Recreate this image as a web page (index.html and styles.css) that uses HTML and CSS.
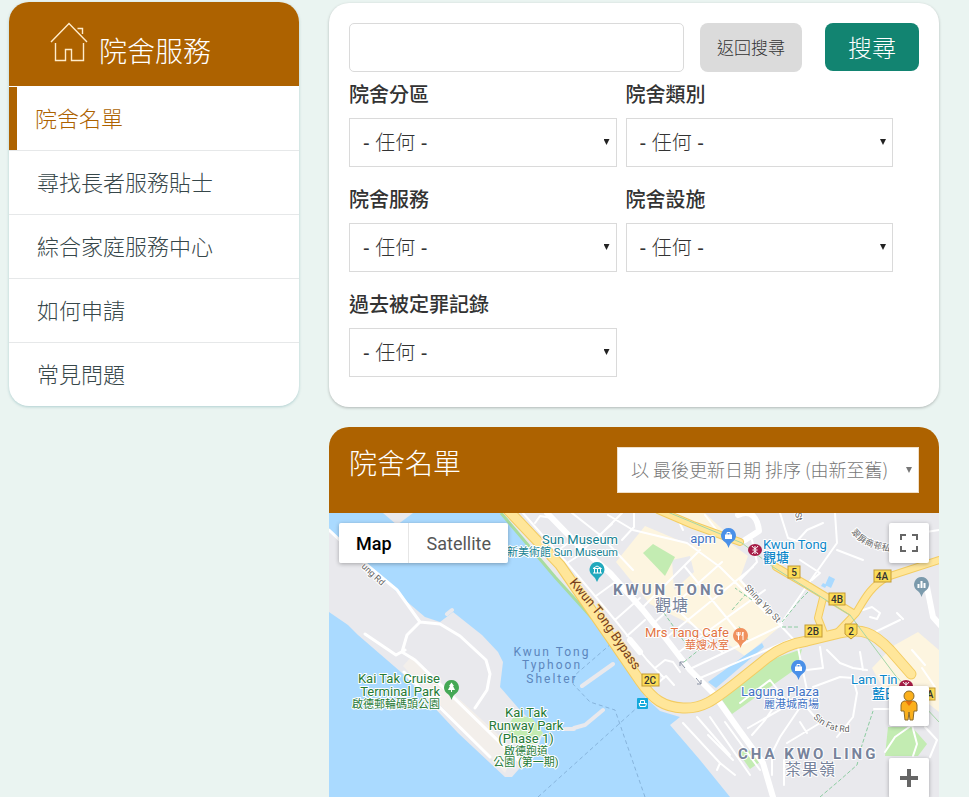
FILE: index.html
```html
<!DOCTYPE html>
<html lang="zh-Hant">
<head>
<meta charset="utf-8">
<meta name="viewport" content="width=device-width, initial-scale=1">
<title>院舍名單</title>
<link rel="stylesheet" href="styles.css">
</head>
<body>
<div class="page">
  <nav class="side" aria-label="院舍服務">
    <div class="side-head">
      <svg class="house" viewBox="0 0 38 40" aria-hidden="true"><path d="M1 20 19 1.500 37 20M27.500 6.500H32.500V12M5.500 21V38.500H15.500V27.500H21.500V38.500H33.500V21"/></svg>
      <h2>院舍服務</h2>
    </div>
    <ul>
      <li><a class="active" href="#">院舍名單</a></li>
      <li><a href="#">尋找長者服務貼士</a></li>
      <li><a href="#">綜合家庭服務中心</a></li>
      <li><a href="#">如何申請</a></li>
      <li><a href="#">常見問題</a></li>
    </ul>
  </nav>
  <main class="main">
    <form class="search">
      <div class="search-bar">
        <input type="text" aria-label="搜尋">
        <button type="button" class="back">返回搜尋</button>
        <button type="submit" class="go">搜尋</button>
      </div>
      <div class="fields">
        <div class="field"><label for="district">院舍分區</label><span class="pick"><select id="district"><option>- 任何 -</option></select></span></div>
        <div class="field"><label for="type">院舍類別</label><span class="pick"><select id="type"><option>- 任何 -</option></select></span></div>
        <div class="field"><label for="service">院舍服務</label><span class="pick"><select id="service"><option>- 任何 -</option></select></span></div>
        <div class="field"><label for="facility">院舍設施</label><span class="pick"><select id="facility"><option>- 任何 -</option></select></span></div>
        <div class="field"><label for="record">過去被定罪記錄</label><span class="pick"><select id="record"><option>- 任何 -</option></select></span></div>
      </div>
    </form>
    <section class="list">
      <header class="list-head">
        <h1>院舍名單</h1>
        <span class="pick sort"><select aria-label="排序"><option>以 最後更新日期 排序 (由新至舊)</option></select></span>
      </header>
      <div class="map">
        <svg class="map-art" viewBox="329 513 610 284" preserveAspectRatio="xMidYMin slice" role="img" aria-label="Map">
          <rect class="land" x="329" y="513" width="610" height="284"/>
          <g class="cream">
            <path d="M616 562 645 526 690 545 722 537 748 556 740 578 782 625 745 656 722 640 650 604Z"/>
            <path d="M655 513H705L735 541 700 532Z"/>
            <path d="M872 668 893 646 918 632 939 650V712L905 685 885 692Z"/>
          </g>
          <path class="land" d="M672 560 690 556 694 572 674 590Z"/>
          <g class="park">
            <path d="M643 553 653 544 675 557 665 576Z"/>
            <path d="M722 700 770 660 802 649 797 668 732 714Z"/>
            <path d="M888 727H912L927 744 918 756H885Z"/>
            <path d="M738 752 755 750 760 762 750 769Z"/>
          </g>
          <g class="water">
            <path d="M329 513H383L397 525 413 513H502L518 532 555 577 592 618 608 640 625 657 642 684 645 697 660 711 680 717 670 725 700 760 730 797H329V612L348 625 358 635 402 673 458 733 505 777 512 777 538 747 543 733 520 710 500 687 503 662 498 652 482 635 453 612 440 622 425 617 405 600 382 578 329 529Z"/>
            <path d="M708 682 762 643 764 647 716 688Z"/>
            <path d="M829 576 835 579 831 588 825 585ZM823 583 827 585 825 588 821 586Z"/>
          </g>
          <path class="cream faint" d="M403 666 412 656 515 750 505 773Z"/>
          <path class="park" d="M507 727 515 715 532 718 543 733 532 746 512 742Z"/>
          <g class="pier"><path d="M582 686 613 664M574 728 585 725 603 710M565 729H574M447 614 452 610"/></g>
          <g class="street wide">
            <path d="M329 530 361 560 397 590 420 622 440 624 460 636 486 660 490 674 487 690 475 708M420 622 407 635 402 652 415 660 520 762M365 634 396 655 405 650M404 672 490 757"/>
          </g>
          <g class="street">
            <path d="M523 513 567 563 590 590 615 620 647 660 664 678M535 523 540 516 552 518M572 513 600 535 633 570M567 563 583 553M560 549 572 540M600 535 622 513M608 515 633 530 687 543 720 567M615 620 640 598M627 636 645 620M596 596 618 580M585 548 612 524M643 607 700 550M655 622 722 562M667 637 753 567M679 652 765 590M692 668 782 625M700 678 790 640M660 592 690 622 722 652M685 567 745 640M720 567 768 615M705 515 722 537M634 513V527L622 540M675 513 683 530M740 580 780 625 797 643 807 690M740 580 757 562 752 540M780 513 788 538 797 541 807 530 823 523M835 513 837 543 813 577 780 625M837 550 863 560M800 560 820 573 812 580M863 610 872 607 880 613 877 619 870 617M873 633 900 620M897 613 903 619M939 530 907 535 895 525M807 670 823 668 820 647M827 650 840 663 853 668 867 670M860 652 863 670M813 687 840 677 853 678 857 693 853 717 837 737M803 703 780 737 772 753V775M803 703 820 723M787 743 820 723M807 733 800 722M740 703 770 680 782 695 765 720 752 735M748 728 797 700M725 722 760 770M710 717 750 775M683 723 720 763 735 775M697 717 730 755M708 735 733 760M720 763 717 770M784 760V785M895 737 912 725 917 744 913 756M895 737 885 752M925 727 937 740 930 757M874 709H892M655 668 665 660 673 662 680 672M658 683 666 676 674 685M922 668 935 687M912 650 925 665"/>
          </g>
          <g class="street main-st">
            <path d="M547 513 580 547 610 573 643 610 667 640 690 670 713 693 737 727 763 763 773 797M738 515C752 508 758 520 759 531L745 540M927 587 933 617 941 626M630 640 640 652"/>
          </g>
          <g class="dash">
            <path d="M538 797 640 705M645 797 615 710 590 702 573 684 575 675 612 643"/>
          </g>
          <g class="trail"><path d="M820 797 840 780 857 765 862 745 873 711M664 613 690 650M684 662 705 645 720 640M732 610 745 595M748 640 738 625M782 622 800 600 808 592M782 627H800M752 600 735 588"/></g>
          <g class="shore"><path d="M501 513 517 532 555 577 592 618"/></g>
          <g class="road edge">
            <path d="M508 510 560 565 612 640 640 681C653 700 664 707 683 708S713 701 737 682L767 658C780 648 794 643 807 641L840 633C862 628 873 632 890 650L911 674"/>
            <path class="thin" d="M658 510 693 525 740 542M776 567 807 585 853 613M939 560 887 577C870 587 864 600 856 613L838 632M823 598 818 618 825 636"/>
          </g>
          <g class="road fill">
            <path d="M508 510 560 565 612 640 640 681C653 700 664 707 683 708S713 701 737 682L767 658C780 648 794 643 807 641L840 633C862 628 873 632 890 650L911 674"/>
            <path class="thin" d="M658 510 693 525 740 542M776 567 807 585 853 613M939 560 887 577C870 587 864 600 856 613L838 632M823 598 818 618 825 636"/>
          </g>
          <path class="rail" d="M658 508 742 543 773 567 850 615 895 675 939 722"/>

          <g class="shield">
            <rect x="788" y="566" width="12" height="12"/><text x="794" y="576">5</text>
            <rect x="874" y="570" width="17" height="12"/><text x="882" y="580">4A</text>
            <rect x="829" y="593" width="16" height="12"/><text x="837" y="603">4B</text>
            <rect x="805" y="625" width="17" height="12"/><text x="813" y="635">2B</text>
            <rect x="642" y="674" width="17" height="12"/><text x="650" y="684">2C</text>
            <rect x="922" y="688" width="13" height="12"/><text x="930" y="698">A</text>
            <path d="M845 624H857V634L851 639 845 634Z"/><text x="851" y="635">2</text>
          </g>

          <path id="bypass" class="guide" d="M569 583 596 615 640 679 660 708"/>
          <path id="shing" class="guide" d="M744 588 779 625"/>
          <path id="sin" class="guide" d="M813 718Q829 733 850 732"/>
          <path id="lane" class="guide" d="M851 532Q862 549 895 552"/>
          <text class="label brown"><textPath href="#bypass">Kwun Tong Bypass</textPath></text>
          <text class="label small"><textPath href="#shing">Shing Yip St</textPath></text>
          <text class="label small"><textPath href="#sin">Sin Fat Rd</textPath></text>
          <text class="label small"><textPath href="#lane">翠屏商邨私家</textPath></text>
          <text class="label small" transform="translate(361 567) rotate(43)">ung Rd</text>
          <text class="label small" transform="translate(795 513) rotate(80)">St</text>

          <g class="label teal end"><text x="618" y="544">Sun Museum</text><text class="cjk" x="618" y="556">新美術館 Sun Museum</text></g>
          <text class="label blue end" x="716" y="543">apm</text>
          <g class="label sky"><text x="763" y="549">Kwun Tong</text><text class="cjk bold" x="763" y="562">觀塘</text></g>
          <g class="label sky"><text x="851" y="684">Lam Tin</text><text class="cjk bold" x="872" y="698">藍田</text></g>
          <g class="label area"><text x="613" y="595">KWUN TONG</text><text class="cjk" x="655" y="611">觀塘</text><text x="738" y="759">CHA KWO LING</text><text class="cjk" x="785" y="775">茶果嶺</text></g>
          <g class="label orange end"><text x="729" y="637">Mrs Tang Cafe</text><text class="cjk" x="729" y="649">華嫂冰室</text></g>
          <g class="label blue end"><text x="819" y="696">Laguna Plaza</text><text class="cjk" x="819" y="708">麗港城商場</text></g>
          <g class="label bay"><text x="552" y="656">Kwun Tong</text><text x="552" y="669">Typhoon</text><text x="552" y="683">Shelter</text></g>
          <g class="label green end"><text x="440" y="683">Kai Tak Cruise</text><text x="440" y="696">Terminal Park</text><text class="cjk" x="440" y="708">啟德郵輪碼頭公園</text></g>
          <g class="label green mid"><text x="526" y="717">Kai Tak</text><text x="526" y="730">Runway Park</text><text x="526" y="743">(Phase 1)</text><text class="cjk" x="526" y="755">啟德跑道</text><text class="cjk" x="526" y="766">公園 (第一期)</text></g>

          <g fill="#21a9bd"><path d="M597 562a7.500 7.500 0 0 1 5 13Q599 577 597 582 595 577 592 575A7.500 7.500 0 0 1 597 562Z"/><path d="M593 568.500 597 566 601.500 568.500ZM594.500 569V573M597.500 569V573M600.500 569V573M593 573H602" fill="none" stroke="#fff"/></g>
          <g fill="#4a90e8"><path d="M728.500 528a7.500 7.500 0 0 1 5 13Q730 543 728.500 548 727 543 723.500 541A7.500 7.500 0 0 1 728.500 528Z"/><path d="M798.500 660a7.500 7.500 0 0 1 5 13Q800 675 798.500 680 797 675 793.500 673A7.500 7.500 0 0 1 798.500 660Z"/></g>
          <g fill="#fff"><path d="M725 534.500H732V539H725ZM795 666.500H802V671H795Z"/><path d="M727 535V532.500H730V535M797 667V664.500H800V667" fill="none" stroke="#fff"/></g>
          <g><path fill="#f0905d" d="M740.500 628a7.500 7.500 0 0 1 5 13Q742 643 740.500 648 739 643 735.500 641A7.500 7.500 0 0 1 740.500 628Z"/><path d="M738.500 632V640M737 632V635H740V632M743 640V632L742 636" fill="none" stroke="#fff"/></g>
          <g><path fill="#45a855" d="M451.500 680a7.500 7.500 0 0 1 5 13Q453 695 451.500 700 450 695 446.500 693A7.500 7.500 0 0 1 451.500 680Z"/><path fill="#fff" d="M451.500 682.500 454 686H453L455 690H452V692H451V690H448L450 686H449Z"/></g>
          <g><path fill="#7b9aac" d="M921.500 577a7.500 7.500 0 0 1 5 13Q923 592 921.500 597 920 592 916.500 590A7.500 7.500 0 0 1 921.500 577Z"/><path d="M918.500 588V584M921.500 588V581M924.500 588V583" fill="none" stroke="#fff" stroke-width="2"/></g>
          <g class="mtr"><ellipse cx="755" cy="550" rx="7" ry="6"/><path d="M752 546Q755 551 758 546M752 554Q755 549 758 554M755 546V554M752.500 550H757.500"/><ellipse cx="906" cy="686" rx="7" ry="6"/><path d="M903 682Q906 687 909 682M906 682V690"/></g>
          <g><rect x="637" y="698" width="11" height="11" rx="1" fill="#13a9dc"/><path d="M640.500 703V700.500H644.500V703M639 703.500H646.500L645.500 706.500H640Z" fill="none" stroke="#fff"/></g>
          <path class="arrows" d="M680 662 685 668M680 666V662H684M696 678 701 684M701 680V684H697"/>
        </svg>
        <div class="map-type"><button type="button" class="on">Map</button><button type="button">Satellite</button></div>
        <button type="button" class="tool full" aria-label="Toggle fullscreen view"><svg viewBox="0 0 18 18"><path d="M0 0H6V2H2V6H0ZM12 0H18V6H16V2H12ZM0 12H2V16H6V18H0ZM16 12H18V18H12V16H16Z"/></svg></button>
        <button type="button" class="tool person" aria-label="Street View"><svg viewBox="0 0 18 32"><path fill="#fbb01c" stroke="#8a6a2a" d="M4 11H14Q17 12 17 15V21H14L13 30H10L9 22 8 30H5L4 21H1V15Q1 12 4 11Z"/><path fill="#e8710a" d="M5 11H13L9 16Z"/><circle cx="9" cy="6" r="5" fill="#fbb01c" stroke="#8a6a2a"/></svg></button>
        <button type="button" class="tool plus" aria-label="Zoom in"><svg viewBox="0 0 18 18"><path d="M7 0H11V7H18V11H11V18H7V11H0V7H7Z"/></svg></button>
      </div>
    </section>
  </main>
</div>
</body>
</html>
```

FILE: styles.css
```css
* { box-sizing: border-box; }
body {
  margin: 0;
  background: #eaf4f1;
  color: #333;
  font-family: "Noto Sans CJK TC", sans-serif;
  font-weight: 300;
}
h1, h2, ul { margin: 0; padding: 0; font-weight: 300; }
button, input, select { font: inherit; color: inherit; margin: 0; }
.page {
  display: grid;
  grid-template-columns: 29fr 61fr;
  gap: 30px;
  height: 100vh;
  min-height: 720px;
  padding: 2px 30px 0 9px;
}
.side {
  align-self: start;
  background: #fff;
  border-radius: 20px;
  overflow: hidden;
  box-shadow: 0 1px 3px rgba(0, 100, 110, .25);
}
.side-head {
  display: flex;
  align-items: flex-start;
  gap: 11px;
  height: 84px;
  margin-bottom: 1px;
  padding: 20px 20px 0 41px;
  background: #ad6200;
  color: #fff;
}
.house { width: 38px; height: 40px; fill: none; stroke: #ffeccb; stroke-width: 1.4; }
.side-head h2 { font-size: 28px; line-height: 56px; }
.side ul { list-style: none; }
.side li { border-bottom: 1px solid #e6e8e9; }
.side li:last-child { border-bottom: 0; }
.side a {
  display: block;
  padding: 0 0 3px 28px;
  color: #37474a;
  font-size: 22px;
  line-height: 60px;
  text-decoration: none;
}
.side a.active { padding-left: 18px; border-left: 8px solid #ad6200; color: #ad6200; }
.main { display: flex; flex-direction: column; gap: 20px; min-width: 0; padding-top: 1px; }
.search {
  padding: 20px;
  background: #fff;
  border-radius: 20px;
  box-shadow: 0 1px 3px rgba(0, 0, 0, .25);
}
.search-bar { display: flex; align-items: flex-start; }
.search-bar input {
  flex: 1;
  min-width: 0;
  height: 49px;
  padding: 0 14px;
  border: 1px solid #dadada;
  border-radius: 5px;
  background: #fff;
}
.search-bar button { border: 0; border-radius: 8px; padding: 0 0 2px; }
.search-bar .back { width: 102px; height: 49px; margin: 0 23px 0 16px; background: #dbdbdb; font-size: 17px; }
.search-bar .go { width: 94px; height: 48px; background: #128471; color: #fff; font-size: 24px; }
.fields { display: grid; grid-template-columns: 1fr 1fr; column-gap: 9px; padding-right: 26px; }
.field { margin-bottom: 10px; }
.field label { display: block; padding-bottom: 2px; font-size: 20px; line-height: 44px; font-weight: 500; }
.pick { position: relative; display: block; }
.pick::after {
  content: "";
  position: absolute;
  top: 21px;
  right: 7px;
  width: 6px;
  height: 6px;
  background: #222;
  clip-path: polygon(0 0, 100% 0, 50% 100%);
  pointer-events: none;
}
select {
  appearance: none;
  display: block;
  width: 100%;
  height: 49px;
  padding: 0 13px;
  border: 1px solid #dadada;
  border-radius: 0;
  background: #fff;
  font-size: 20px;
}
.field select { font-family: "Liberation Sans", "Noto Sans CJK TC", sans-serif; }
.list {
  flex: 1;
  display: flex;
  flex-direction: column;
  min-height: 0;
  border-radius: 20px 20px 0 0;
  overflow: hidden;
}
.list-head {
  display: flex;
  justify-content: space-between;
  align-items: flex-start;
  padding: 20px;
  background: #ad6200;
}
.list-head h1 { color: #fff; font-size: 28px; line-height: 30px; }
.sort { width: 302px; }
.sort select { height: 46px; padding-bottom: 2px; border-color: #f0dfc8; color: #777; font-size: 18px; }
.sort::after { top: 20px; background: #777; }

.map { position: relative; flex: 1; min-height: 0; overflow: hidden; font-family: Roboto, sans-serif; }
.map-art { display: block; width: 100%; height: 100%; font-family: Roboto, "Noto Sans CJK TC", sans-serif; }
.land { fill: #e9e9ed; }
.cream { fill: #fdf5e0; }
.faint { fill: #f3efeb; }
.park { fill: #c3ecb2; }
.water { fill: #aadaff; }
.pier, .street, .dash, .trail, .shore, .road, .rail, .guide { fill: none; }
.pier { stroke: #e9e9ed; stroke-width: 4; stroke-linecap: round; }
.street { stroke: #fff; stroke-width: 2; stroke-linejoin: round; stroke-linecap: round; }
.street.wide { stroke-width: 3; }
.street.main-st { stroke-width: 6; }
.dash { stroke: #87b4dc; stroke-dasharray: 4 3; }
.trail { stroke: #8ccca1; stroke-dasharray: 4 2; }
.shore { stroke: #a8dca0; stroke-width: 3; }
.road { stroke-linejoin: round; stroke-linecap: round; }
.edge { stroke: #f3cc62; stroke-width: 11; }
.edge .thin { stroke-width: 8; }
.road.fill { stroke: #ffe69a; stroke-width: 9; }
.road.fill .thin { stroke-width: 6; }
.rail { stroke: #a5d6a7; stroke-width: 1; }
.shield { fill: #fbdc57; stroke: #c49b36; }
.shield text { fill: #333; stroke: none; font-size: 10px; font-weight: 500; text-anchor: middle; }
.label { font-size: 13px; font-weight: 400; stroke: #fff; stroke-width: 2; stroke-linejoin: round; paint-order: stroke; }
.cjk { font-size: 11px; }
.bold { font-size: 13px; font-weight: 500; }
.end { text-anchor: end; }
.mid { text-anchor: middle; }
.teal { fill: #168292; }
.blue { fill: #4373c4; }
.sky { fill: #0d87c9; }
.green { fill: #257a36; }
.orange { fill: #e27443; }
.brown { fill: #78401c; stroke: #ffe69a; }
.small { font-size: 9px; fill: #666; }
.area { font-size: 15px; font-weight: 700; letter-spacing: 3px; fill: #77839b; }
.area .cjk { font-size: 16px; letter-spacing: 1px; font-weight: 400; }
.bay { fill: #5c86bd; stroke: none; font-size: 12px; letter-spacing: 2px; text-anchor: middle; }
.mtr { fill: #a61c46; }
.mtr path { fill: none; stroke: #fff; }
.arrows { fill: none; stroke: #8b93a5; }
.map button { border: 0; padding: 0; background: #fff; }
.map-type { position: absolute; top: 10px; left: 10px; display: flex; box-shadow: 0 1px 4px rgba(0, 0, 0, .3); border-radius: 2px; overflow: hidden; }
.map .map-type button { height: 40px; padding: 0 17px 0 18px; color: #565656; font-size: 18px; font-weight: 400; }
.map .map-type .on { padding: 0 16px 0 17px; border-right: 1px solid #e6e6e6; color: #000; font-weight: 500; }
.map .tool { position: absolute; right: 10px; width: 40px; height: 40px; display: grid; place-items: center; border-radius: 2px; box-shadow: 0 1px 4px rgba(0, 0, 0, .3); }
.tool svg { width: 18px; fill: #666; }
.full { top: 10px; }
.person { top: 173px; }
.plus { top: 245px; }
```
